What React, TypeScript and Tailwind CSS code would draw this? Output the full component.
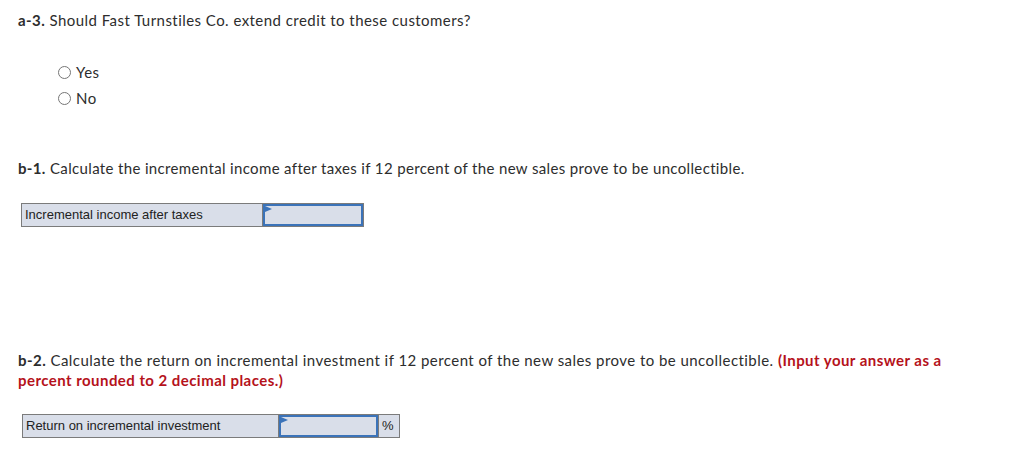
import React from "react";

function Flag() {
  return (
    <svg className="absolute left-0 top-0" width="7" height="7" viewBox="0 0 7 7">
      <polygon points="0,0 7,3 0,6" fill="#3b73b9" />
    </svg>
  );
}

export default function App() {
  const font = { fontFamily: "Lato, 'Noto Sans', sans-serif" };
  const arial = { fontFamily: "'Liberation Sans', Arial, sans-serif" };
  return (
    <div className="w-[1031px] h-[457px] bg-white text-[#2d2d2d] px-[18px] pt-[10px] text-[15px] leading-[20px] tracking-[0.45px]" style={font}>
      <p>
        <b className="font-bold">a-3.</b> Should Fast Turnstiles Co. extend credit to these customers?
      </p>
      <div className="mt-[32px] ml-[40px] flex flex-col gap-[6px]">
        {["Yes", "No"].map((t) => (
          <label key={t} className="flex items-center gap-[5px] h-[20px]">
            <span className="w-[13px] h-[13px] rounded-full border border-[#767676] bg-white" />
            <span>{t}</span>
          </label>
        ))}
      </div>
      <p className="mt-[50px] tracking-[0.35px]">
        <b className="font-bold">b-1.</b> Calculate the incremental income after taxes if 12 percent of the new sales prove to be uncollectible.
      </p>
      <div className="mt-[25px] ml-[3px] flex w-[343px] h-[24px] border border-[#7b7b7b] bg-[#d9dee9] tracking-normal" style={arial}>
        <div className="w-[241px] border-r border-[#7b7b7b] text-[13px] leading-[22px] pl-[3px] text-[#222]">Incremental income after taxes</div>
        <div className="relative flex-1 border-2 border-[#3b73b9]">
          <Flag />
        </div>
      </div>
      <div className="mt-[123px] w-[925px]">
        <p>
          <b className="font-bold">b-2.</b> Calculate the return on incremental investment if 12 percent of the new sales prove to be uncollectible.{" "}
          <b className="font-bold text-[#b5121b]">(Input your answer as a percent rounded to 2 decimal places.)</b>
        </p>
      </div>
      <div className="mt-[24px] ml-[4px] flex w-[378px] h-[24px] border border-[#7b7b7b] bg-[#d9dee9] tracking-normal" style={arial}>
        <div className="w-[256px] border-r border-[#7b7b7b] text-[13px] leading-[22px] pl-[3px] text-[#222]">Return on incremental investment</div>
        <div className="relative w-[99px] border-2 border-[#3b73b9]">
          <Flag />
        </div>
        <div className="flex-1 border-l border-[#7b7b7b] text-[13px] leading-[22px] pl-[3px] text-[#222]">%</div>
      </div>
    </div>
  );
}
